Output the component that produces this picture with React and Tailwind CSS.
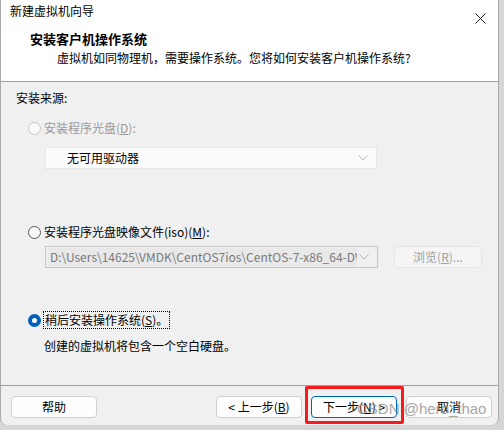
import React from 'react';

const font = { fontFamily: '"Microsoft YaHei UI", "Noto Sans CJK SC", "Noto Sans", sans-serif' };

function Chevron({ color = '#a6a6a6' }) {
  return (
    <svg width="10" height="6" viewBox="0 0 10 6" fill="none">
      <path d="M0.5 0.5 L5 5 L9.5 0.5" stroke={color} strokeWidth="1" />
    </svg>
  );
}

function Radio({ checked, disabled }) {
  if (checked) {
    return (
      <span className="flex h-[13px] w-[13px] items-center justify-center rounded-full bg-[#005fb8]">
        <span className="h-[5px] w-[5px] rounded-full bg-white" />
      </span>
    );
  }
  return (
    <span
      className={`h-[13px] w-[13px] rounded-full border bg-[#fafafa] ${
        disabled ? 'border-[#c4c4c4]' : 'border-[#595959]'
      }`}
    />
  );
}

function Button({ children, focused }) {
  return (
    <div
      className={`flex h-[22px] w-[86px] items-center justify-center rounded-[4px] border bg-[#fdfdfd] text-[12px] text-black ${
        focused ? 'border-[#0067c0]' : 'border-[#d0d0d0]'
      }`}
    >
      {children}
    </div>
  );
}

export default function App() {
  return (
    <div className="h-[430px] w-[504px] overflow-hidden bg-[#d6d6d6]" style={font}>
      <div className="relative flex h-[425px] w-[499px] flex-col overflow-hidden rounded-b-[7px] border-l border-r border-[#a9a9a9] bg-[#f0f0f0]">
        {/* header */}
        <div className="h-[82px] shrink-0 border-b border-[#a0a0a0] bg-white">
          <div className="flex h-[20px] items-center justify-between pl-[9px] pr-[12px]">
            <span className="pt-[1px] text-[12px] leading-none text-black">新建虚拟机向导</span>
            <svg width="11" height="11" viewBox="0 0 11 11" className="mt-[16px]">
              <path d="M0.5 0.5 L10.5 10.5 M10.5 0.5 L0.5 10.5" stroke="#222" strokeWidth="1" />
            </svg>
          </div>
          <div className="mt-[11px] pl-[29px] text-[13px] font-bold leading-[16px] text-black">安装客户机操作系统</div>
          <div className="mt-[3px] pl-[56px] text-[12px] leading-[16px] text-black">
            虚拟机如同物理机，需要操作系统。您将如何安装客户机操作系统?
          </div>
        </div>

        {/* body */}
        <div className="flex flex-1 flex-col pl-[15px] text-[12px]">
          <div className="mt-[8px] leading-[16px] text-black">安装来源:</div>

          <div className="mt-[14px] flex items-center gap-[3px] pl-[12px] leading-[16px] text-[#9a9a9a]">
            <Radio disabled />
            <span>
              安装程序光盘(<span className="underline">D</span>):
            </span>
          </div>
          <div className="mt-[11px] ml-[29px] flex h-[22px] w-[332px] items-center justify-between border border-[#e6e6e6] bg-[#fbfbfb] pl-[21px] pr-[8px] text-black">
            <span>无可用驱动器</span>
            <Chevron color="#b8b8b8" />
          </div>

          <div className="mt-[55px] flex items-center gap-[3px] pl-[12px] leading-[16px] text-black">
            <Radio />
            <span>
              安装程序光盘映像文件(iso)(<span className="underline">M</span>):
            </span>
          </div>
          <div className="mt-[6px] flex items-center">
            <div className="ml-[29px] flex h-[22px] w-[333px] items-center border border-[#c6c6c6] bg-[#f0f0f0] pl-[2px] pr-[8px]">
              <div className="flex h-[18px] w-[309px] items-center overflow-hidden whitespace-nowrap bg-[#e9e9e9] pl-[2px] text-[12px] text-[#7a7a7a]">
                D:\Users\14625\VMDK\CentOS7ios\CentOS-7-x86_64-DVD-2009.iso
              </div>
              <div className="ml-auto">
                <Chevron color="#b0b0b0" />
              </div>
            </div>
            <div className="ml-[16px] flex h-[22px] w-[88px] items-center justify-center rounded-[4px] border border-[#e5e5e5] bg-[#f5f5f5] text-[#a0a0a0]">
              浏览(<span className="underline">R</span>)...
            </div>
          </div>

          <div className="mt-[43px] flex items-center gap-[2px] pl-[12px] leading-[16px] text-black">
            <Radio checked />
            <span className="border border-dotted border-black px-[1px]">
              稍后安装操作系统(<span className="underline">S</span>)。
            </span>
          </div>
          <div className="mt-[9px] pl-[28px] leading-[16px] text-black">创建的虚拟机将包含一个空白硬盘。</div>
        </div>

        {/* footer */}
        <div className="flex h-[40px] shrink-0 items-start border-t border-[#a0a0a0] pl-[10px] pt-[10px]">
          <Button>帮助</Button>
          <div className="ml-[119px] flex gap-[9px]">
            <Button>
              &lt; 上一步(<span className="underline">B</span>)
            </Button>
            <Button focused>
              下一步(<span className="underline">N</span>) &gt;
            </Button>
            <Button>取消</Button>
          </div>
        </div>

        {/* red highlight */}
        <div className="absolute left-[304px] top-[386px] h-[38px] w-[99px] rounded-[2px] border-[3px] border-[#f41c1c]" />
        {/* watermark */}
        <div
          className="absolute left-[356px] top-[399px] whitespace-nowrap text-[15px] leading-[20px] text-[#8c8c8c] opacity-75"
          style={{ fontFamily: '"Liberation Sans", Arial, sans-serif' }}
        >
          CSDN @hero_thao
        </div>
      </div>
    </div>
  );
}
